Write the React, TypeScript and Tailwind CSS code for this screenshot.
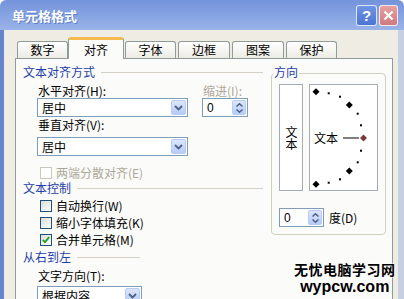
const Chevron = () => (
	<svg width="9" height="6" viewBox="0 0 9 6">
		<polyline points="1,1 4.5,4.5 8,1" fill="none" stroke="#4d6185" strokeWidth="1.8" />
	</svg>
);

const DropButton = () => (
	<div className="w-[15px] h-[15px] my-[1px] mr-[1px] rounded-[2px] border border-[#b9cbf3] bg-gradient-to-b from-[#dce6fd] to-[#b7cbf7] flex items-center justify-center">
		<Chevron />
	</div>
);

const SpinButton = () => (
	<div className="w-[14px] h-[15px] my-[1px] mr-[1px] rounded-[2px] border border-[#b9cbf3] bg-gradient-to-b from-[#dce6fd] to-[#b7cbf7] flex flex-col items-center justify-center gap-[2px]">
		<svg width="7" height="4" viewBox="0 0 7 4">
			<polyline points="0.5,3.5 3.5,0.8 6.5,3.5" fill="none" stroke="#4d6185" strokeWidth="1.5" />
		</svg>
		<svg width="7" height="4" viewBox="0 0 7 4">
			<polyline points="0.5,0.5 3.5,3.2 6.5,0.5" fill="none" stroke="#4d6185" strokeWidth="1.5" />
		</svg>
	</div>
);

const Combo = ({ value, width }: { value: string; width: string }) => (
	<div className={`${width} h-[19px] border border-[#7f9db9] bg-white flex items-center justify-between`}>
		<span className="pl-[4px] text-[12px] leading-none">{value}</span>
		<DropButton />
	</div>
);

const Spin = ({ width }: { width: string }) => (
	<div className={`${width} h-[19px] border border-[#7f9db9] bg-white flex items-center justify-between`}>
		<span className="pl-[4px] text-[12px] leading-none font-['Liberation_Sans',sans-serif]">0</span>
		<SpinButton />
	</div>
);

const Check = ({ label, checked, disabled }: { label: string; checked?: boolean; disabled?: boolean }) => (
	<div className="h-[17px] flex items-center pl-[18px] gap-[4px]">
		<div
			className={
				disabled
					? "w-[12px] h-[12px] border border-[#cac8bb] bg-white"
					: "w-[12px] h-[12px] border border-[#1c5180] bg-gradient-to-br from-[#dcdcd7] to-white flex items-center justify-center"
			}>
			{checked && (
				<svg width="8" height="8" viewBox="0 0 8 8">
					<polyline points="0.8,3.8 3,6.2 7.2,1.2" fill="none" stroke="#21a121" strokeWidth="1.8" />
				</svg>
			)}
		</div>
		<span className={disabled ? "text-[12px] leading-none text-[#aca899]" : "text-[12px] leading-none text-black"}>
			{label}
		</span>
	</div>
);

const GroupHead = ({ text, line }: { text: string; line: string }) => (
	<div className="h-[14px] flex items-center pl-[1px]">
		<span className="text-[12px] leading-none text-[#1f3fa8]">{text}</span>
		<div className={`${line} h-px bg-[#d4d0c8] ml-[6px]`} />
	</div>
);

const dots: [number, number][] = [
	[18.7, 8.3],
	[30, 11.7],
	[47.7, 28.7],
	[51, 40.3],
	[51, 65.7],
	[47.7, 77.3],
	[30, 94.3],
	[18.7, 97.7],
];

const diamonds: [number, number][] = [
	[6, 6.7],
	[39.3, 20],
	[39.3, 86],
	[6, 99.3],
];

const Dial = () => (
	<svg width="67" height="105" viewBox="0 0 67 105">
		{dots.map(([x, y], i) => (
			<rect key={i} x={x - 1} y={y - 1} width="2" height="2" fill="#000" />
		))}
		{diamonds.map(([x, y], i) => (
			<polygon key={i} points={`${x},${y - 3.5} ${x + 3.5},${y} ${x},${y + 3.5} ${x - 3.5},${y}`} fill="#000" />
		))}
		<polygon points="53.5,49.5 57,53 53.5,56.5 50,53" fill="#7a3b3b" />
		<text x="4" y="57.5" fontSize="12" fontFamily="'Noto Sans CJK SC', sans-serif" fill="#000">
			文本
		</text>
		<line x1="33" y1="53" x2="49" y2="53" stroke="#000" strokeWidth="1" />
	</svg>
);

const tabBase =
	"h-[17px] border border-b-0 border-[#919b9c] rounded-t-[3px] bg-gradient-to-b from-white to-[#ecebe4] flex items-center justify-center text-[12px] leading-none";

export default function App() {
	return (
		<div className="w-[404px] h-[299px] overflow-hidden relative flex flex-col font-['Noto_Sans_CJK_SC','Liberation_Sans',sans-serif] text-black">
			<header className="h-[30px] shrink-0 flex items-center pl-[12px] pr-[6px] bg-gradient-to-b from-[#7393da] via-[#86a3e2] to-[#9ab3e8] rounded-t-[6px]">
				<span className="text-white text-[13px] font-bold leading-none [text-shadow:1px_1px_0_#5f7fc6]">单元格格式</span>
				<div className="ml-auto flex gap-[2px]">
					<div className="w-[21px] h-[21px] rounded-[3px] border border-white/80 bg-gradient-to-b from-[#6f95e6] to-[#4c74d2] flex items-center justify-center text-white font-bold text-[15px] leading-none font-['Liberation_Sans',sans-serif]">
						?
					</div>
					<div className="w-[19px] h-[21px] rounded-[3px] border border-white/80 bg-gradient-to-b from-[#e7a0a0] to-[#d07a7e] flex items-center justify-center">
						<svg width="11" height="11" viewBox="0 0 11 11">
							<path d="M1.5 1.5 L9.5 9.5 M9.5 1.5 L1.5 9.5" stroke="#fff" strokeWidth="2.2" />
						</svg>
					</div>
				</div>
			</header>

			<main className="flex-1 flex flex-col bg-[#efede3] border-l-[4px] border-l-[#6684cc] border-r-[6px] border-r-[#c7cfe3]">
				<nav className="h-[28px] shrink-0 flex items-end pl-[13px]">
					<div className={`${tabBase} w-[51px]`}>数字</div>
					<div className="relative z-10 -mb-px w-[56px] h-[22px] border border-b-0 border-[#919b9c] border-t-[3px] border-t-[#f5b94d] rounded-t-[3px] bg-[#fbfbf9] flex items-center justify-center text-[12px] leading-none">
						对齐
					</div>
					<div className={`${tabBase} w-[51px] ml-[1px]`}>字体</div>
					<div className={`${tabBase} w-[52px] ml-[2px]`}>边框</div>
					<div className={`${tabBase} w-[52px] ml-[2px]`}>图案</div>
					<div className={`${tabBase} w-[51px] ml-[2px]`}>保护</div>
				</nav>

				<section className="flex-1 ml-[11px] w-[378px] border border-b-0 border-[#919b9c] bg-[#fbfbf9] flex">
					<div className="w-[249px] pl-[6px] flex flex-col">
						<div className="mt-[6px]">
							<GroupHead text="文本对齐方式" line="flex-1 mr-[2px]" />
						</div>
						<div className="mt-[5px] h-[14px] flex items-center">
							<span className="ml-[16px] w-[165px] text-[12px] leading-none">水平对齐(H):</span>
							<span className="text-[12px] leading-none text-[#aca899]">缩进(I):</span>
						</div>
						<div className="flex items-center ml-[15px]">
							<Combo value="居中" width="w-[151px]" />
							<div className="ml-[14px]">
								<Spin width="w-[46px]" />
							</div>
						</div>
						<div className="mt-[1px] h-[14px] flex items-center">
							<span className="ml-[16px] text-[12px] leading-none">垂直对齐(V):</span>
						</div>
						<div className="mt-[5px] ml-[15px]">
							<Combo value="居中" width="w-[151px]" />
						</div>
						<div className="mt-[8px]">
							<Check label="两端分散对齐(E)" disabled />
						</div>
						<GroupHead text="文本控制" line="flex-1 mr-[2px]" />
						<div className="mt-[2px] flex flex-col">
							<Check label="自动换行(W)" />
							<Check label="缩小字体填充(K)" />
							<Check label="合并单元格(M)" checked />
						</div>
						<div className="mt-[2px]">
							<GroupHead text="从右到左" line="w-[63px]" />
						</div>
						<div className="mt-[5px] h-[14px] flex items-center">
							<span className="ml-[16px] text-[12px] leading-none">文字方向(T):</span>
						</div>
						<div className="mt-[3px] ml-[15px]">
							<Combo value="根据内容" width="w-[105px]" />
						</div>
					</div>

					<div className="relative ml-[6px] mt-[14px] w-[115px] h-[162px] border border-[#d0d0bf] rounded-[4px] flex flex-col">
						<span className="absolute -top-[8px] left-[1px] px-[1px] bg-[#fbfbf9] text-[12px] leading-none text-[#1f3fa8]">
							方向
						</span>
						<div className="flex mt-[10px] ml-[7px] gap-[6px]">
							<div className="w-[24px] h-[107px] border border-[#a5acb5] bg-white flex items-center justify-center">
								<span className="[writing-mode:vertical-rl] [text-orientation:upright] text-[12px] leading-[12px]">文本</span>
							</div>
							<div className="w-[69px] h-[107px] border border-[#a5acb5] bg-white">
								<Dial />
							</div>
						</div>
						<div className="flex items-center mt-[17px] ml-[7px]">
							<Spin width="w-[45px]" />
							<span className="ml-[5px] text-[12px] leading-none">度(D)</span>
						</div>
					</div>
				</section>
			</main>

			<div className="absolute left-[294px] top-[260px] flex flex-col items-center leading-none text-black font-bold [text-shadow:0_0_2px_#fff,0_0_2px_#fff,0_0_1px_#fff]">
				<span className="text-[14px] leading-[18px] tracking-[0.5px]">无忧电脑学习网</span>
				<span className="text-[16px] leading-[17px] font-['Liberation_Sans',sans-serif]">wypcw.com</span>
			</div>
		</div>
	);
}
